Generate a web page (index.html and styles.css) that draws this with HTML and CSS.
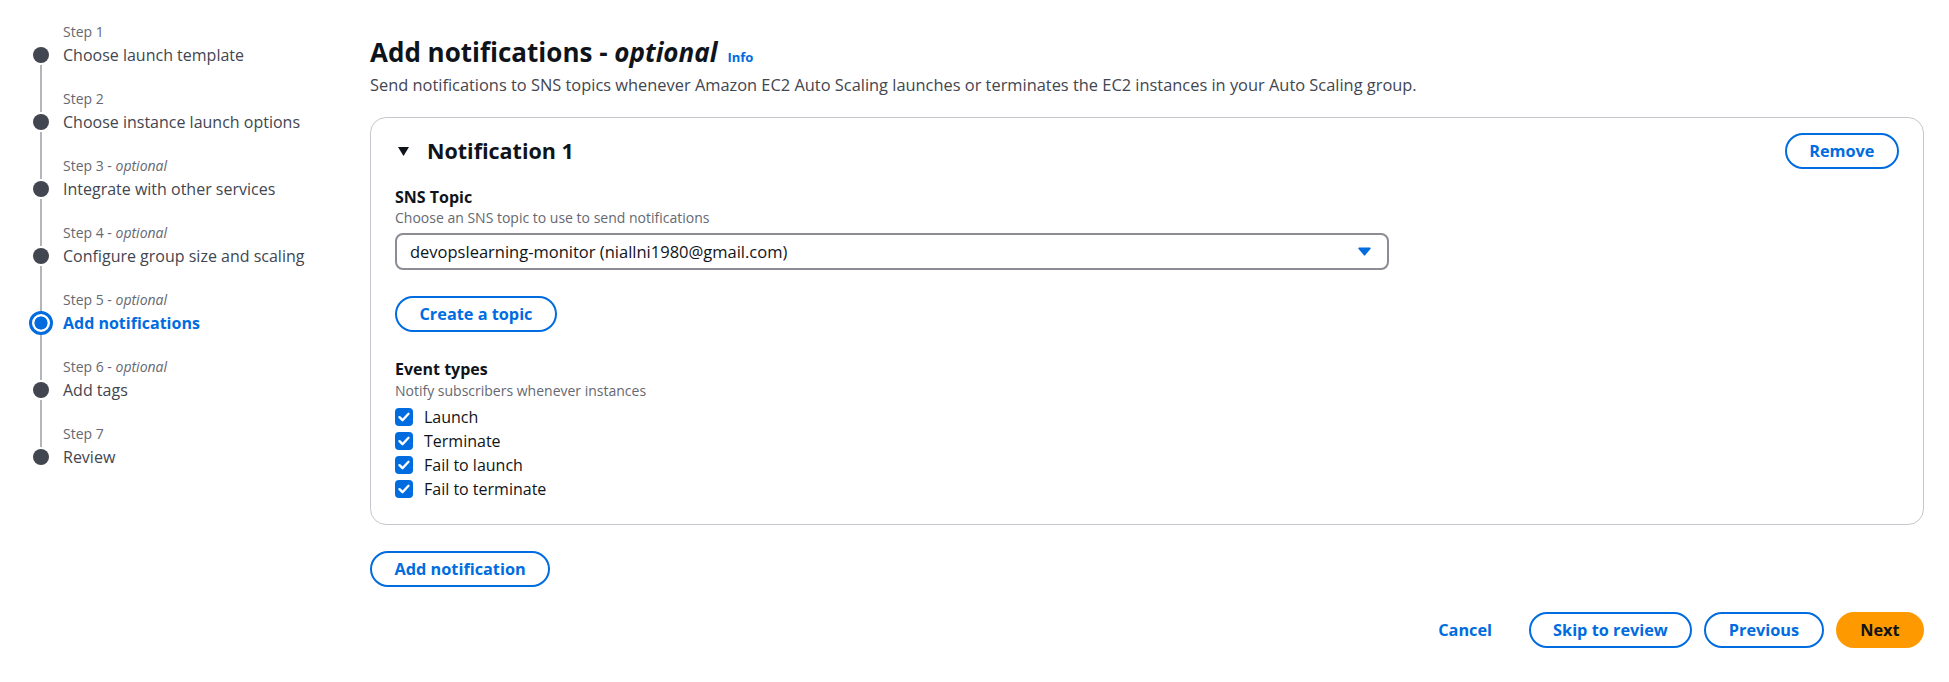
FILE: index.html
```html
<!DOCTYPE html>
<html lang="en">
<head>
<meta charset="utf-8">
<title>Add notifications</title>
<link rel="stylesheet" href="styles.css">
</head>
<body>
<div class="layout">
  <nav class="steps">
    <div class="step first">
      <div class="marker"><span class="seg-top"></span><span class="dot"></span><span class="seg-bottom"></span></div>
      <div class="step-text"><div class="step-label">Step 1</div><div class="step-title">Choose launch template</div></div>
    </div>
    <div class="step">
      <div class="marker"><span class="seg-top"></span><span class="dot"></span><span class="seg-bottom"></span></div>
      <div class="step-text"><div class="step-label">Step 2</div><div class="step-title">Choose instance launch options</div></div>
    </div>
    <div class="step">
      <div class="marker"><span class="seg-top"></span><span class="dot"></span><span class="seg-bottom"></span></div>
      <div class="step-text"><div class="step-label">Step 3 - <i>optional</i></div><div class="step-title">Integrate with other services</div></div>
    </div>
    <div class="step">
      <div class="marker"><span class="seg-top"></span><span class="dot"></span><span class="seg-bottom"></span></div>
      <div class="step-text"><div class="step-label">Step 4 - <i>optional</i></div><div class="step-title">Configure group size and scaling</div></div>
    </div>
    <div class="step active">
      <div class="marker"><span class="seg-top"></span><span class="dot"></span><span class="seg-bottom"></span></div>
      <div class="step-text"><div class="step-label">Step 5 - <i>optional</i></div><div class="step-title">Add notifications</div></div>
    </div>
    <div class="step">
      <div class="marker"><span class="seg-top"></span><span class="dot"></span><span class="seg-bottom"></span></div>
      <div class="step-text"><div class="step-label">Step 6 - <i>optional</i></div><div class="step-title">Add tags</div></div>
    </div>
    <div class="step last">
      <div class="marker"><span class="seg-top"></span><span class="dot"></span><span class="seg-bottom"></span></div>
      <div class="step-text"><div class="step-label">Step 7</div><div class="step-title">Review</div></div>
    </div>
  </nav>

  <main class="content">
    <h1 class="page-title"><span>Add notifications - <i>optional</i></span><a class="info" href="#">Info</a></h1>
    <p class="desc">Send notifications to SNS topics whenever Amazon EC2 Auto Scaling launches or terminates the EC2 instances in your Auto Scaling group.</p>

    <section class="card">
      <div class="card-head">
        <h2 class="card-title"><svg class="caret" width="11" height="9" viewBox="0 0 11 9"><polygon points="0,0 11,0 5.5,9" fill="#0f141a"/></svg>Notification 1</h2>
        <button class="btn">Remove</button>
      </div>

      <div class="field">
        <div class="label">SNS Topic</div>
        <div class="hint">Choose an SNS topic to use to send notifications</div>
        <div class="select">
          <span>devopslearning-monitor (niallni1980@gmail.com)</span>
          <svg width="13" height="9" viewBox="0 0 13 9"><path d="M1 0.5h11a0.8 0.8 0 0 1 0.6 1.3L7.1 8.3a0.8 0.8 0 0 1-1.2 0L0.4 1.8A0.8 0.8 0 0 1 1 0.5z" fill="#006ce0"/></svg>
        </div>
      </div>

      <button class="btn create">Create a topic</button>

      <div class="field events">
        <div class="label">Event types</div>
        <div class="hint">Notify subscribers whenever instances</div>
        <div class="checks">
          <label class="check"><span class="box"><svg width="18" height="18" viewBox="0 0 18 18"><path d="M4.5 9.2l3 3 6-6.4" fill="none" stroke="#fff" stroke-width="2.4" stroke-linecap="round" stroke-linejoin="round"/></svg></span>Launch</label>
          <label class="check"><span class="box"><svg width="18" height="18" viewBox="0 0 18 18"><path d="M4.5 9.2l3 3 6-6.4" fill="none" stroke="#fff" stroke-width="2.4" stroke-linecap="round" stroke-linejoin="round"/></svg></span>Terminate</label>
          <label class="check"><span class="box"><svg width="18" height="18" viewBox="0 0 18 18"><path d="M4.5 9.2l3 3 6-6.4" fill="none" stroke="#fff" stroke-width="2.4" stroke-linecap="round" stroke-linejoin="round"/></svg></span>Fail to launch</label>
          <label class="check"><span class="box"><svg width="18" height="18" viewBox="0 0 18 18"><path d="M4.5 9.2l3 3 6-6.4" fill="none" stroke="#fff" stroke-width="2.4" stroke-linecap="round" stroke-linejoin="round"/></svg></span>Fail to terminate</label>
        </div>
      </div>
    </section>

    <button class="btn add">Add notification</button>

    <div class="footer">
      <button class="btn link">Cancel</button>
      <button class="btn">Skip to review</button>
      <button class="btn">Previous</button>
      <button class="btn primary">Next</button>
    </div>
  </main>
</div>
</body>
</html>
```

FILE: styles.css
```css
* { box-sizing: border-box; }

body {
  margin: 0;
  font-family: "Open Sans", "Noto Sans", sans-serif;
  color: #0f141a;
  background: #ffffff;
}

.layout {
  display: grid;
  grid-template-columns: 370px 1fr;
  padding-right: 25px;
}

/* ---------- Side navigation ---------- */
.steps {
  padding: 21px 0 0 25px;
}

.step {
  display: flex;
}

.marker {
  width: 32px;
  margin-right: 6px;
  display: flex;
  flex-direction: column;
  align-items: center;
}

.seg-top {
  width: 2px;
  height: 24px;
  margin-bottom: 2px;
  background: #b4b4bb;
}

.seg-bottom {
  width: 2px;
  flex: 1;
  margin-top: 2px;
  background: #b4b4bb;
}

.first .seg-top,
.last .seg-bottom {
  visibility: hidden;
}

.dot {
  flex: none;
  width: 16px;
  height: 16px;
  border-radius: 50%;
  background: #424650;
}

.active .dot {
  width: 24px;
  height: 24px;
  margin: -4px 0;
  border: 3px solid #006ce0;
  background: radial-gradient(circle, #006ce0 0 6.3px, #ffffff 6.8px);
}

.active .seg-bottom { margin-top: 4px; }

.step-text {
  padding-bottom: 21px;
}

.step-label {
  font-size: 14px;
  line-height: 22px;
  color: #656871;
}

.step-title {
  font-size: 16px;
  line-height: 24px;
  color: #424650;
}

.active .step-title {
  color: #006ce0;
  font-weight: 700;
}

/* ---------- Main content ---------- */
.content {
  padding-top: 36px;
}

.page-title {
  margin: 0;
  height: 32px;
  display: flex;
  align-items: baseline;
  gap: 10px;
  font-size: 26px;
  line-height: 32px;
  font-weight: 700;
}

.info {
  font-size: 13px;
  line-height: 1;
  font-weight: 700;
  color: #006ce0;
  text-decoration: none;
}

.desc {
  margin: 6px 0 0;
  font-size: 16.4px;
  line-height: 22px;
  color: #424650;
}

.card {
  margin-top: 21px;
  border: 1px solid #c6c6cd;
  border-radius: 16px;
  padding: 15px 24px 23px;
}

.card-head {
  display: flex;
  justify-content: space-between;
  align-items: center;
  height: 36px;
}

.card-title {
  margin: 0;
  padding-left: 3px;
  display: flex;
  align-items: center;
  gap: 18px;
  font-size: 21.5px;
  line-height: 28px;
  font-weight: 700;
}

.caret { flex: none; }

.field {
  margin-top: 17px;
}

.label {
  font-size: 16px;
  line-height: 22px;
  font-weight: 700;
}

.hint {
  margin-top: 1px;
  font-size: 14px;
  line-height: 18px;
  color: #656871;
}

.select {
  margin-top: 6px;
  width: 994px;
  height: 37px;
  border: 2px solid #8c8c94;
  border-radius: 8px;
  padding: 0 16px 0 13px;
  display: flex;
  align-items: center;
  justify-content: space-between;
  font-size: 16.5px;
}

.btn {
  height: 36px;
  border: 2px solid #006ce0;
  border-radius: 18px;
  padding: 0 22.5px;
  background: #ffffff;
  color: #006ce0;
  font-family: "Open Sans", "Noto Sans", sans-serif;
  font-size: 16.3px;
  font-weight: 700;
  line-height: 32px;
  cursor: pointer;
}

.create {
  margin-top: 26px;
}

.events {
  margin-top: 26px;
}

.events .hint {
  margin-top: 2px;
}

.checks {
  margin-top: 5px;
  display: flex;
  flex-direction: column;
}

.check {
  display: flex;
  align-items: center;
  height: 24px;
  font-size: 16px;
}

.box {
  flex: none;
  width: 18px;
  height: 18px;
  margin-right: 11px;
  border-radius: 4px;
  background: #006ce0;
  display: flex;
}

.add {
  margin-top: 26px;
}

.footer {
  margin-top: 25px;
  display: flex;
  justify-content: flex-end;
  gap: 12px;
}

.link {
  border-color: transparent;
}

.primary {
  background: #ff9900;
  border-color: #ff9900;
  color: #0f141a;
}
```
